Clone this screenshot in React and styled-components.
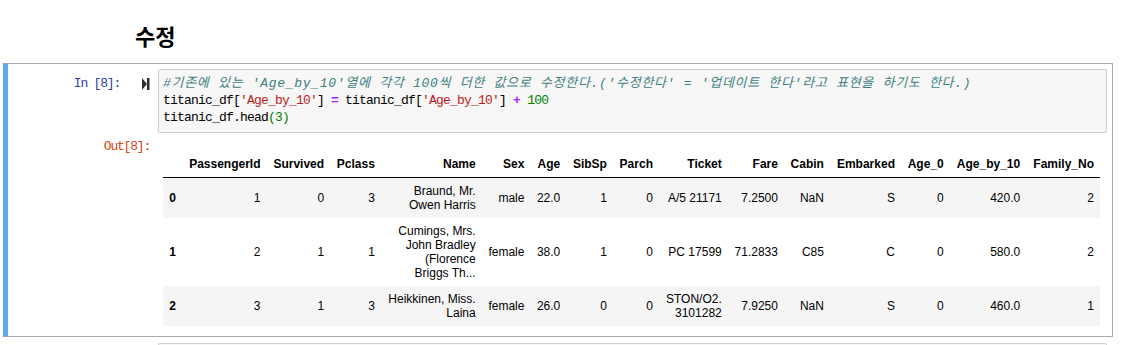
import styled, { createGlobalStyle } from 'styled-components';

const GlobalStyle = createGlobalStyle`
  html, body {
    margin: 0;
    padding: 0;
    overflow: hidden;
    background: #fff;
  }
  body {
    font-family: "Liberation Sans", Arial, sans-serif;
    color: #000;
  }
`;

const Notebook = styled.div`
  width: 1110px;
  margin-left: 3px;
`;

const Heading = styled.h2`
  margin: 0;
  height: 63px;
  box-sizing: border-box;
  padding: 22px 0 0 132px;
  font-family: "Noto Sans CJK KR", sans-serif;
  font-size: 22px;
  line-height: 26px;
  font-weight: 700;
`;

const Cell = styled.div`
  box-sizing: border-box;
  border: 1px solid ${(p) => (p.$selected ? '#ababab' : 'transparent')};
  border-left: 5px solid ${(p) => (p.$selected ? '#5fa6f0' : 'transparent')};
  padding: 5px;
`;

const Row = styled.div`
  display: flex;
  align-items: flex-start;
`;

const Prompt = styled.div`
  flex: none;
  width: 145px;
  box-sizing: border-box;
  display: flex;
  justify-content: flex-end;
  align-items: center;
  gap: 22px;
  padding: ${(p) => (p.$out ? '5px' : '6px')} 8px 0 0;
  font-family: "Liberation Mono", "DejaVu Sans Mono", monospace;
  font-size: 13px;
  letter-spacing: -1.2px;
  line-height: 17px;
  min-height: 17px;
  color: ${(p) => (p.$out ? '#D84315' : '#303F9F')};
  white-space: pre;
`;

const RunIcon = () => (
  <svg width="8" height="12" viewBox="0 0 8 12">
    <path d="M0 0L5 6L0 12Z" fill="#2f2f2f" />
    <rect x="5" y="0" width="2.5" height="12" fill="#2f2f2f" />
  </svg>
);

const InputArea = styled.div`
  flex: 1;
  min-width: 0;
  background: #f7f7f7;
  border: 1px solid #cfcfcf;
  border-radius: 2px;
  padding: 5px 4px 6px;
  font-family: "Liberation Mono", "DejaVu Sans Mono", "Noto Sans CJK KR", monospace;
  font-size: 13px;
  letter-spacing: -0.8px;
  line-height: 17px;
  color: #000;
`;

const CodeLine = styled.div`
  white-space: pre;
  height: 17px;
`;

const tokenColors = {
  comment: '#408080',
  string: '#BA2121',
  op: '#AA22FF',
  number: '#008000',
};

const Tok = styled.span`
  color: ${(p) => tokenColors[p.$kind] || '#000'};
  font-style: ${(p) => (p.$kind === 'comment' ? 'italic' : 'normal')};
  font-weight: ${(p) => (p.$kind === 'op' ? 700 : 400)};
  letter-spacing: ${(p) => (p.$kind === 'comment' ? '0.7px' : 'inherit')};
  font-family: ${(p) =>
    p.$kind === 'comment'
      ? '"Liberation Mono", "Noto Sans CJK KR", monospace'
      : 'inherit'};
`;

const OutputArea = styled.div`
  flex: 1;
  min-width: 0;
  padding: 18px 0 5px 5px;
`;

const Table = styled.table`
  width: 937px;
  border-collapse: collapse;
  border-spacing: 0;
  border: none;
  font-size: 12px;
  color: #000;
`;

const HeadCell = styled.th`
  padding: 6px;
  text-align: right;
  vertical-align: middle;
  line-height: normal;
  font-weight: 700;
  white-space: nowrap;
  border-bottom: 1px solid #000;
`;

const BodyRow = styled.tr`
  &:nth-child(odd) {
    background: #f5f5f5;
  }
`;

const IndexCell = styled.th`
  padding: 6px;
  text-align: right;
  vertical-align: middle;
  line-height: normal;
  font-weight: 700;
`;

const DataCell = styled.td`
  padding: 6px;
  text-align: right;
  vertical-align: middle;
  line-height: normal;
  white-space: nowrap;
`;

const columns = [
  'PassengerId', 'Survived', 'Pclass', 'Name', 'Sex', 'Age', 'SibSp', 'Parch',
  'Ticket', 'Fare', 'Cabin', 'Embarked', 'Age_0', 'Age_by_10', 'Family_No',
];

// multi-line values are given as arrays, wrapped the way the notebook wrapped them
const rows = [
  ['1', '0', '3', ['Braund, Mr.', 'Owen Harris'], 'male', '22.0', '1', '0', 'A/5 21171', '7.2500', 'NaN', 'S', '0', '420.0', '2'],
  ['2', '1', '1', ['Cumings, Mrs.', 'John Bradley', '(Florence', 'Briggs Th...'], 'female', '38.0', '1', '0', 'PC 17599', '71.2833', 'C85', 'C', '0', '580.0', '2'],
  ['3', '1', '3', ['Heikkinen, Miss.', 'Laina'], 'female', '26.0', '0', '0', ['STON/O2.', '3101282'], '7.9250', 'NaN', 'S', '0', '460.0', '1'],
];

function CellValue({ value }) {
  if (!Array.isArray(value)) return value;
  return value.map((line, i) => (
    <span key={i}>
      {i > 0 && <br />}
      {line}
    </span>
  ));
}

function DataFrame() {
  return (
    <Table>
      <thead>
        <tr>
          <HeadCell />
          {columns.map((c) => (
            <HeadCell key={c}>{c}</HeadCell>
          ))}
        </tr>
      </thead>
      <tbody>
        {rows.map((r, i) => (
          <BodyRow key={i}>
            <IndexCell>{i}</IndexCell>
            {r.map((v, j) => (
              <DataCell key={j}>
                <CellValue value={v} />
              </DataCell>
            ))}
          </BodyRow>
        ))}
      </tbody>
    </Table>
  );
}

export default function App() {
  return (
    <>
      <GlobalStyle />
      <Notebook>
        <Heading>수정</Heading>
        <Cell $selected>
          <Row>
            <Prompt>
              <span>In [8]:</span>
              <RunIcon />
            </Prompt>
            <InputArea>
              <CodeLine>
                <Tok $kind="comment">
                  #기존에 있는 'Age_by_10'열에 각각 100씩 더한 값으로 수정한다.('수정한다' = '업데이트 한다'라고 표현을 하기도 한다.)
                </Tok>
              </CodeLine>
              <CodeLine>
                titanic_df[<Tok $kind="string">'Age_by_10'</Tok>] <Tok $kind="op">=</Tok> titanic_df[
                <Tok $kind="string">'Age_by_10'</Tok>] <Tok $kind="op">+</Tok> <Tok $kind="number">100</Tok>
              </CodeLine>
              <CodeLine>
                titanic_df.head<Tok $kind="number">(3)</Tok>
              </CodeLine>
            </InputArea>
          </Row>
          <Row>
            <Prompt $out>Out[8]:</Prompt>
            <OutputArea>
              <DataFrame />
            </OutputArea>
          </Row>
        </Cell>
        <Cell>
          <Row>
            <Prompt />
            <InputArea>
              <CodeLine> </CodeLine>
            </InputArea>
          </Row>
        </Cell>
      </Notebook>
    </>
  );
}
